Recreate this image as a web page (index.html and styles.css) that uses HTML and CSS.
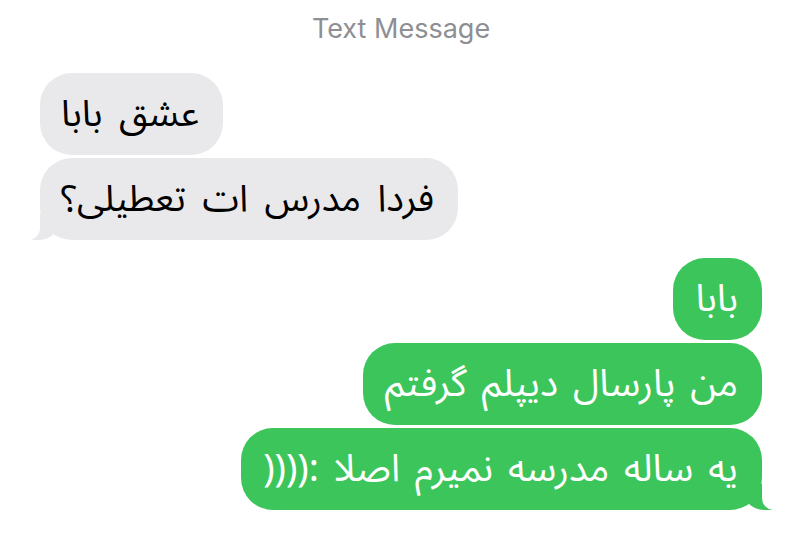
FILE: index.html
```html
<!DOCTYPE html>
<html lang="fa">
<head>
  <meta charset="UTF-8" />
  <meta name="viewport" content="width=device-width, initial-scale=1.0"/>
  <title>Text Message</title>
  <link rel="stylesheet" href="styles.css">
</head>
<body>

  <div class="chat">
    <div class="service">Text Message</div>

    <div class="group received">
      <div class="bubble" dir="rtl">عشق بابا</div>
      <div class="bubble tail" dir="rtl">فردا مدرس ات تعطیلی؟</div>
    </div>

    <div class="group sent">
      <div class="bubble" dir="rtl">بابا</div>
      <div class="bubble" dir="rtl">من پارسال دیپلم گرفتم</div>
      <div class="bubble tail" dir="rtl">یه ساله مدرسه نمیرم اصلا :((((</div>
    </div>
  </div>

</body>
</html>
```

FILE: styles.css
```css
body {
  margin: 0;
  background: #fff;
  font-family: "Noto Sans Arabic", "DejaVu Sans", sans-serif;
}
.chat {
  display: flex;
  flex-direction: column;
  padding: 10px 38px 0 40px;
}
.service {
  text-align: center;
  font-family: Inter, "Liberation Sans", sans-serif;
  font-size: 27px;
  color: #8e8e93;
  height: 38px;
  line-height: 38px;
  margin-bottom: 25px;
}
.group {
  display: flex;
  flex-direction: column;
  gap: 3px;
}
.received {
  align-items: flex-start;
}
.sent {
  align-items: flex-end;
  margin-top: 18px;
}
.bubble {
  position: relative;
  height: 82px;
  display: flex;
  align-items: center;
  border-radius: 32px;
  font-size: 37px;
  white-space: nowrap;
}
.received .bubble {
  background: #e9e9eb;
  color: #000;
  padding: 0 24px 0 21px;
  word-spacing: 7px;
}
.sent .bubble {
  background: #3cc55b;
  color: #fff;
  font-size: 38px;
  padding: 0 24px 0 22px;
  word-spacing: 5px;
}
.bubble.tail::before,
.bubble.tail::after {
  content: "";
  position: absolute;
  bottom: 0;
  height: 26px;
}
.received .tail::before {
  left: -9px;
  width: 30px;
  background: #e9e9eb;
  border-bottom-right-radius: 22px;
}
.received .tail::after {
  left: -14px;
  width: 14px;
  background: #fff;
  border-bottom-right-radius: 12px;
}
.sent .tail::before {
  right: -10px;
  width: 30px;
  background: #3cc55b;
  border-bottom-left-radius: 22px;
}
.sent .tail::after {
  right: -14px;
  width: 14px;
  background: #fff;
  border-bottom-left-radius: 12px;
}
```
